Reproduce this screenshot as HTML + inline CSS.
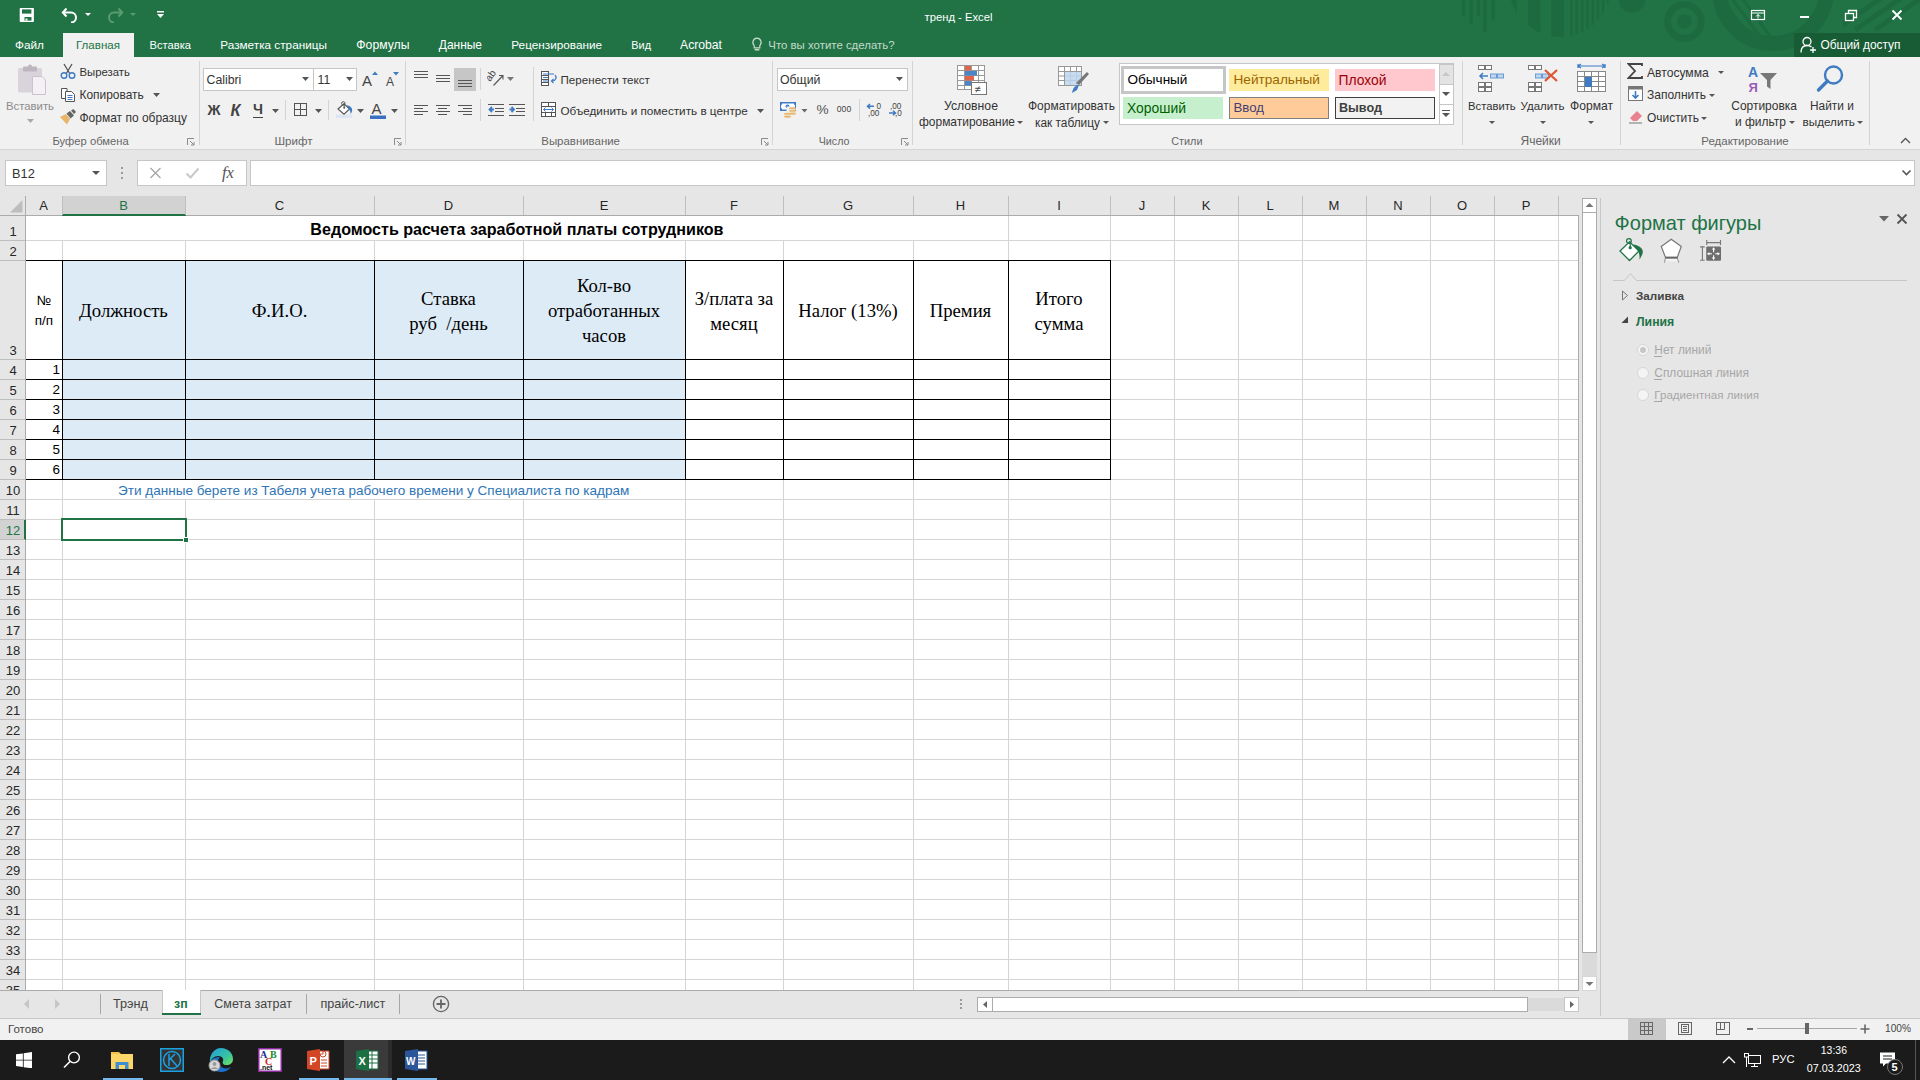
<!DOCTYPE html>
<html><head><meta charset="utf-8"><title>тренд - Excel</title>
<style>
html,body{margin:0;padding:0;width:1920px;height:1080px;overflow:hidden;background:#fff;font-family:"Liberation Sans",sans-serif;}
body>div,body>span{position:absolute;box-sizing:border-box;}
span{white-space:pre;}
</style></head><body>
<div style="left:0px;top:0px;width:1920px;height:57px;background:#217346"></div>
<div style="left:0px;top:57px;width:1920px;height:92px;background:#f1f1f1"></div>
<div style="left:0px;top:149px;width:1920px;height:1px;background:#d5d5d5"></div>
<div style="left:0px;top:150px;width:1920px;height:890px;background:#e6e6e6"></div>
<div style="left:26px;top:216px;width:1552px;height:774px;background:#fff"></div>
<div style="left:63px;top:261px;width:622px;height:218px;background:#ddebf7"></div>
<div style="left:62px;top:216px;width:1px;height:774px;background:#d4d4d4"></div>
<div style="left:185px;top:216px;width:1px;height:774px;background:#d4d4d4"></div>
<div style="left:374px;top:216px;width:1px;height:774px;background:#d4d4d4"></div>
<div style="left:523px;top:216px;width:1px;height:774px;background:#d4d4d4"></div>
<div style="left:685px;top:216px;width:1px;height:774px;background:#d4d4d4"></div>
<div style="left:783px;top:216px;width:1px;height:774px;background:#d4d4d4"></div>
<div style="left:913px;top:216px;width:1px;height:774px;background:#d4d4d4"></div>
<div style="left:1008px;top:216px;width:1px;height:774px;background:#d4d4d4"></div>
<div style="left:1110px;top:216px;width:1px;height:774px;background:#d4d4d4"></div>
<div style="left:1174px;top:216px;width:1px;height:774px;background:#d4d4d4"></div>
<div style="left:1238px;top:216px;width:1px;height:774px;background:#d4d4d4"></div>
<div style="left:1302px;top:216px;width:1px;height:774px;background:#d4d4d4"></div>
<div style="left:1366px;top:216px;width:1px;height:774px;background:#d4d4d4"></div>
<div style="left:1430px;top:216px;width:1px;height:774px;background:#d4d4d4"></div>
<div style="left:1494px;top:216px;width:1px;height:774px;background:#d4d4d4"></div>
<div style="left:1558px;top:216px;width:1px;height:774px;background:#d4d4d4"></div>
<div style="left:26px;top:240px;width:1552px;height:1px;background:#d4d4d4"></div>
<div style="left:26px;top:260px;width:1552px;height:1px;background:#d4d4d4"></div>
<div style="left:26px;top:359px;width:1552px;height:1px;background:#d4d4d4"></div>
<div style="left:26px;top:379px;width:1552px;height:1px;background:#d4d4d4"></div>
<div style="left:26px;top:399px;width:1552px;height:1px;background:#d4d4d4"></div>
<div style="left:26px;top:419px;width:1552px;height:1px;background:#d4d4d4"></div>
<div style="left:26px;top:439px;width:1552px;height:1px;background:#d4d4d4"></div>
<div style="left:26px;top:459px;width:1552px;height:1px;background:#d4d4d4"></div>
<div style="left:26px;top:479px;width:1552px;height:1px;background:#d4d4d4"></div>
<div style="left:26px;top:499px;width:1552px;height:1px;background:#d4d4d4"></div>
<div style="left:26px;top:519px;width:1552px;height:1px;background:#d4d4d4"></div>
<div style="left:26px;top:539px;width:1552px;height:1px;background:#d4d4d4"></div>
<div style="left:26px;top:559px;width:1552px;height:1px;background:#d4d4d4"></div>
<div style="left:26px;top:579px;width:1552px;height:1px;background:#d4d4d4"></div>
<div style="left:26px;top:599px;width:1552px;height:1px;background:#d4d4d4"></div>
<div style="left:26px;top:619px;width:1552px;height:1px;background:#d4d4d4"></div>
<div style="left:26px;top:639px;width:1552px;height:1px;background:#d4d4d4"></div>
<div style="left:26px;top:659px;width:1552px;height:1px;background:#d4d4d4"></div>
<div style="left:26px;top:679px;width:1552px;height:1px;background:#d4d4d4"></div>
<div style="left:26px;top:699px;width:1552px;height:1px;background:#d4d4d4"></div>
<div style="left:26px;top:719px;width:1552px;height:1px;background:#d4d4d4"></div>
<div style="left:26px;top:739px;width:1552px;height:1px;background:#d4d4d4"></div>
<div style="left:26px;top:759px;width:1552px;height:1px;background:#d4d4d4"></div>
<div style="left:26px;top:779px;width:1552px;height:1px;background:#d4d4d4"></div>
<div style="left:26px;top:799px;width:1552px;height:1px;background:#d4d4d4"></div>
<div style="left:26px;top:819px;width:1552px;height:1px;background:#d4d4d4"></div>
<div style="left:26px;top:839px;width:1552px;height:1px;background:#d4d4d4"></div>
<div style="left:26px;top:859px;width:1552px;height:1px;background:#d4d4d4"></div>
<div style="left:26px;top:879px;width:1552px;height:1px;background:#d4d4d4"></div>
<div style="left:26px;top:899px;width:1552px;height:1px;background:#d4d4d4"></div>
<div style="left:26px;top:919px;width:1552px;height:1px;background:#d4d4d4"></div>
<div style="left:26px;top:939px;width:1552px;height:1px;background:#d4d4d4"></div>
<div style="left:26px;top:959px;width:1552px;height:1px;background:#d4d4d4"></div>
<div style="left:26px;top:979px;width:1552px;height:1px;background:#d4d4d4"></div>
<div style="left:26px;top:216px;width:982px;height:24px;background:#fff"></div>
<div style="left:63px;top:480px;width:622px;height:19px;background:#fff"></div>
<div style="left:62px;top:260px;width:1px;height:220px;background:#000"></div>
<div style="left:185px;top:260px;width:1px;height:220px;background:#000"></div>
<div style="left:374px;top:260px;width:1px;height:220px;background:#000"></div>
<div style="left:523px;top:260px;width:1px;height:220px;background:#000"></div>
<div style="left:685px;top:260px;width:1px;height:220px;background:#000"></div>
<div style="left:783px;top:260px;width:1px;height:220px;background:#000"></div>
<div style="left:913px;top:260px;width:1px;height:220px;background:#000"></div>
<div style="left:1008px;top:260px;width:1px;height:220px;background:#000"></div>
<div style="left:1110px;top:260px;width:1px;height:220px;background:#000"></div>
<div style="left:26px;top:260px;width:1085px;height:1px;background:#000"></div>
<div style="left:26px;top:359px;width:1085px;height:1px;background:#000"></div>
<div style="left:26px;top:379px;width:1085px;height:1px;background:#000"></div>
<div style="left:26px;top:399px;width:1085px;height:1px;background:#000"></div>
<div style="left:26px;top:419px;width:1085px;height:1px;background:#000"></div>
<div style="left:26px;top:439px;width:1085px;height:1px;background:#000"></div>
<div style="left:26px;top:459px;width:1085px;height:1px;background:#000"></div>
<div style="left:26px;top:479px;width:1085px;height:1px;background:#000"></div>
<div style="left:1578px;top:215px;width:1px;height:776px;background:#ababab"></div>
<div style="left:0px;top:990px;width:1579px;height:1px;background:#ababab"></div>
<div style="left:0px;top:196px;width:1578px;height:19px;background:#e6e6e6"></div>
<div style="left:0px;top:215px;width:1578px;height:1px;background:#ababab"></div>
<div style="left:62px;top:196px;width:123px;height:19px;background:#d2d2d2"></div>
<div style="left:62px;top:214px;width:124px;height:2px;background:#217346"></div>
<div style="left:25px;top:196px;width:1px;height:19px;background:#bfbfbf"></div>
<div style="left:62px;top:196px;width:1px;height:19px;background:#bfbfbf"></div>
<div style="left:185px;top:196px;width:1px;height:19px;background:#bfbfbf"></div>
<div style="left:374px;top:196px;width:1px;height:19px;background:#bfbfbf"></div>
<div style="left:523px;top:196px;width:1px;height:19px;background:#bfbfbf"></div>
<div style="left:685px;top:196px;width:1px;height:19px;background:#bfbfbf"></div>
<div style="left:783px;top:196px;width:1px;height:19px;background:#bfbfbf"></div>
<div style="left:913px;top:196px;width:1px;height:19px;background:#bfbfbf"></div>
<div style="left:1008px;top:196px;width:1px;height:19px;background:#bfbfbf"></div>
<div style="left:1110px;top:196px;width:1px;height:19px;background:#bfbfbf"></div>
<div style="left:1174px;top:196px;width:1px;height:19px;background:#bfbfbf"></div>
<div style="left:1238px;top:196px;width:1px;height:19px;background:#bfbfbf"></div>
<div style="left:1302px;top:196px;width:1px;height:19px;background:#bfbfbf"></div>
<div style="left:1366px;top:196px;width:1px;height:19px;background:#bfbfbf"></div>
<div style="left:1430px;top:196px;width:1px;height:19px;background:#bfbfbf"></div>
<div style="left:1494px;top:196px;width:1px;height:19px;background:#bfbfbf"></div>
<div style="left:1558px;top:196px;width:1px;height:19px;background:#bfbfbf"></div>
<div style="left:25px;top:196px;width:1px;height:794px;background:#ababab"></div>
<span style="left:39.16px;top:196.50px;font-family:'Liberation Sans';font-size:13.00px;line-height:18px;color:#262626;font-weight:400;">A</span>
<span style="left:119.16px;top:196.50px;font-family:'Liberation Sans';font-size:13.00px;line-height:18px;color:#217346;font-weight:400;">B</span>
<span style="left:274.81px;top:196.50px;font-family:'Liberation Sans';font-size:13.00px;line-height:18px;color:#262626;font-weight:400;">C</span>
<span style="left:443.81px;top:196.50px;font-family:'Liberation Sans';font-size:13.00px;line-height:18px;color:#262626;font-weight:400;">D</span>
<span style="left:599.66px;top:196.50px;font-family:'Liberation Sans';font-size:13.00px;line-height:18px;color:#262626;font-weight:400;">E</span>
<span style="left:730.03px;top:196.50px;font-family:'Liberation Sans';font-size:13.00px;line-height:18px;color:#262626;font-weight:400;">F</span>
<span style="left:842.94px;top:196.50px;font-family:'Liberation Sans';font-size:13.00px;line-height:18px;color:#262626;font-weight:400;">G</span>
<span style="left:955.81px;top:196.50px;font-family:'Liberation Sans';font-size:13.00px;line-height:18px;color:#262626;font-weight:400;">H</span>
<span style="left:1057.19px;top:196.50px;font-family:'Liberation Sans';font-size:13.00px;line-height:18px;color:#262626;font-weight:400;">I</span>
<span style="left:1138.75px;top:196.50px;font-family:'Liberation Sans';font-size:13.00px;line-height:18px;color:#262626;font-weight:400;">J</span>
<span style="left:1201.66px;top:196.50px;font-family:'Liberation Sans';font-size:13.00px;line-height:18px;color:#262626;font-weight:400;">K</span>
<span style="left:1266.38px;top:196.50px;font-family:'Liberation Sans';font-size:13.00px;line-height:18px;color:#262626;font-weight:400;">L</span>
<span style="left:1328.58px;top:196.50px;font-family:'Liberation Sans';font-size:13.00px;line-height:18px;color:#262626;font-weight:400;">M</span>
<span style="left:1393.31px;top:196.50px;font-family:'Liberation Sans';font-size:13.00px;line-height:18px;color:#262626;font-weight:400;">N</span>
<span style="left:1456.94px;top:196.50px;font-family:'Liberation Sans';font-size:13.00px;line-height:18px;color:#262626;font-weight:400;">O</span>
<span style="left:1521.66px;top:196.50px;font-family:'Liberation Sans';font-size:13.00px;line-height:18px;color:#262626;font-weight:400;">P</span>
<svg style="position:absolute;left:10px;top:200px;" width="13" height="13" viewBox="0 0 13 13"><polygon points="12.5,0 12.5,12.5 0,12.5" fill="#bdbdbd"/></svg>
<div style="left:0px;top:240px;width:25px;height:1px;background:#bdbdbd"></div>
<span style="left:9.38px;top:223.00px;font-family:'Liberation Sans';font-size:13.00px;line-height:18px;color:#262626;font-weight:400;">1</span>
<div style="left:0px;top:260px;width:25px;height:1px;background:#bdbdbd"></div>
<span style="left:9.38px;top:243.00px;font-family:'Liberation Sans';font-size:13.00px;line-height:18px;color:#262626;font-weight:400;">2</span>
<div style="left:0px;top:359px;width:25px;height:1px;background:#bdbdbd"></div>
<span style="left:9.38px;top:342.00px;font-family:'Liberation Sans';font-size:13.00px;line-height:18px;color:#262626;font-weight:400;">3</span>
<div style="left:0px;top:379px;width:25px;height:1px;background:#bdbdbd"></div>
<span style="left:9.38px;top:362.00px;font-family:'Liberation Sans';font-size:13.00px;line-height:18px;color:#262626;font-weight:400;">4</span>
<div style="left:0px;top:399px;width:25px;height:1px;background:#bdbdbd"></div>
<span style="left:9.38px;top:382.00px;font-family:'Liberation Sans';font-size:13.00px;line-height:18px;color:#262626;font-weight:400;">5</span>
<div style="left:0px;top:419px;width:25px;height:1px;background:#bdbdbd"></div>
<span style="left:9.38px;top:402.00px;font-family:'Liberation Sans';font-size:13.00px;line-height:18px;color:#262626;font-weight:400;">6</span>
<div style="left:0px;top:439px;width:25px;height:1px;background:#bdbdbd"></div>
<span style="left:9.38px;top:422.00px;font-family:'Liberation Sans';font-size:13.00px;line-height:18px;color:#262626;font-weight:400;">7</span>
<div style="left:0px;top:459px;width:25px;height:1px;background:#bdbdbd"></div>
<span style="left:9.38px;top:442.00px;font-family:'Liberation Sans';font-size:13.00px;line-height:18px;color:#262626;font-weight:400;">8</span>
<div style="left:0px;top:479px;width:25px;height:1px;background:#bdbdbd"></div>
<span style="left:9.38px;top:462.00px;font-family:'Liberation Sans';font-size:13.00px;line-height:18px;color:#262626;font-weight:400;">9</span>
<div style="left:0px;top:499px;width:25px;height:1px;background:#bdbdbd"></div>
<span style="left:5.77px;top:482.00px;font-family:'Liberation Sans';font-size:13.00px;line-height:18px;color:#262626;font-weight:400;">10</span>
<div style="left:0px;top:519px;width:25px;height:1px;background:#bdbdbd"></div>
<span style="left:6.25px;top:502.00px;font-family:'Liberation Sans';font-size:13.00px;line-height:18px;color:#262626;font-weight:400;">11</span>
<div style="left:0px;top:520px;width:25px;height:20px;background:#d2d2d2"></div>
<div style="left:24px;top:520px;width:2px;height:20px;background:#217346"></div>
<div style="left:0px;top:539px;width:25px;height:1px;background:#bdbdbd"></div>
<span style="left:5.77px;top:522.00px;font-family:'Liberation Sans';font-size:13.00px;line-height:18px;color:#217346;font-weight:400;">12</span>
<div style="left:0px;top:559px;width:25px;height:1px;background:#bdbdbd"></div>
<span style="left:5.77px;top:542.00px;font-family:'Liberation Sans';font-size:13.00px;line-height:18px;color:#262626;font-weight:400;">13</span>
<div style="left:0px;top:579px;width:25px;height:1px;background:#bdbdbd"></div>
<span style="left:5.77px;top:562.00px;font-family:'Liberation Sans';font-size:13.00px;line-height:18px;color:#262626;font-weight:400;">14</span>
<div style="left:0px;top:599px;width:25px;height:1px;background:#bdbdbd"></div>
<span style="left:5.77px;top:582.00px;font-family:'Liberation Sans';font-size:13.00px;line-height:18px;color:#262626;font-weight:400;">15</span>
<div style="left:0px;top:619px;width:25px;height:1px;background:#bdbdbd"></div>
<span style="left:5.77px;top:602.00px;font-family:'Liberation Sans';font-size:13.00px;line-height:18px;color:#262626;font-weight:400;">16</span>
<div style="left:0px;top:639px;width:25px;height:1px;background:#bdbdbd"></div>
<span style="left:5.77px;top:622.00px;font-family:'Liberation Sans';font-size:13.00px;line-height:18px;color:#262626;font-weight:400;">17</span>
<div style="left:0px;top:659px;width:25px;height:1px;background:#bdbdbd"></div>
<span style="left:5.77px;top:642.00px;font-family:'Liberation Sans';font-size:13.00px;line-height:18px;color:#262626;font-weight:400;">18</span>
<div style="left:0px;top:679px;width:25px;height:1px;background:#bdbdbd"></div>
<span style="left:5.77px;top:662.00px;font-family:'Liberation Sans';font-size:13.00px;line-height:18px;color:#262626;font-weight:400;">19</span>
<div style="left:0px;top:699px;width:25px;height:1px;background:#bdbdbd"></div>
<span style="left:5.77px;top:682.00px;font-family:'Liberation Sans';font-size:13.00px;line-height:18px;color:#262626;font-weight:400;">20</span>
<div style="left:0px;top:719px;width:25px;height:1px;background:#bdbdbd"></div>
<span style="left:5.77px;top:702.00px;font-family:'Liberation Sans';font-size:13.00px;line-height:18px;color:#262626;font-weight:400;">21</span>
<div style="left:0px;top:739px;width:25px;height:1px;background:#bdbdbd"></div>
<span style="left:5.77px;top:722.00px;font-family:'Liberation Sans';font-size:13.00px;line-height:18px;color:#262626;font-weight:400;">22</span>
<div style="left:0px;top:759px;width:25px;height:1px;background:#bdbdbd"></div>
<span style="left:5.77px;top:742.00px;font-family:'Liberation Sans';font-size:13.00px;line-height:18px;color:#262626;font-weight:400;">23</span>
<div style="left:0px;top:779px;width:25px;height:1px;background:#bdbdbd"></div>
<span style="left:5.77px;top:762.00px;font-family:'Liberation Sans';font-size:13.00px;line-height:18px;color:#262626;font-weight:400;">24</span>
<div style="left:0px;top:799px;width:25px;height:1px;background:#bdbdbd"></div>
<span style="left:5.77px;top:782.00px;font-family:'Liberation Sans';font-size:13.00px;line-height:18px;color:#262626;font-weight:400;">25</span>
<div style="left:0px;top:819px;width:25px;height:1px;background:#bdbdbd"></div>
<span style="left:5.77px;top:802.00px;font-family:'Liberation Sans';font-size:13.00px;line-height:18px;color:#262626;font-weight:400;">26</span>
<div style="left:0px;top:839px;width:25px;height:1px;background:#bdbdbd"></div>
<span style="left:5.77px;top:822.00px;font-family:'Liberation Sans';font-size:13.00px;line-height:18px;color:#262626;font-weight:400;">27</span>
<div style="left:0px;top:859px;width:25px;height:1px;background:#bdbdbd"></div>
<span style="left:5.77px;top:842.00px;font-family:'Liberation Sans';font-size:13.00px;line-height:18px;color:#262626;font-weight:400;">28</span>
<div style="left:0px;top:879px;width:25px;height:1px;background:#bdbdbd"></div>
<span style="left:5.77px;top:862.00px;font-family:'Liberation Sans';font-size:13.00px;line-height:18px;color:#262626;font-weight:400;">29</span>
<div style="left:0px;top:899px;width:25px;height:1px;background:#bdbdbd"></div>
<span style="left:5.77px;top:882.00px;font-family:'Liberation Sans';font-size:13.00px;line-height:18px;color:#262626;font-weight:400;">30</span>
<div style="left:0px;top:919px;width:25px;height:1px;background:#bdbdbd"></div>
<span style="left:5.77px;top:902.00px;font-family:'Liberation Sans';font-size:13.00px;line-height:18px;color:#262626;font-weight:400;">31</span>
<div style="left:0px;top:939px;width:25px;height:1px;background:#bdbdbd"></div>
<span style="left:5.77px;top:922.00px;font-family:'Liberation Sans';font-size:13.00px;line-height:18px;color:#262626;font-weight:400;">32</span>
<div style="left:0px;top:959px;width:25px;height:1px;background:#bdbdbd"></div>
<span style="left:5.77px;top:942.00px;font-family:'Liberation Sans';font-size:13.00px;line-height:18px;color:#262626;font-weight:400;">33</span>
<div style="left:0px;top:979px;width:25px;height:1px;background:#bdbdbd"></div>
<span style="left:5.77px;top:962.00px;font-family:'Liberation Sans';font-size:13.00px;line-height:18px;color:#262626;font-weight:400;">34</span>
<span style="left:5.77px;top:982.00px;font-family:'Liberation Sans';font-size:13.00px;line-height:18px;color:#262626;font-weight:400;">35</span>
<div style="left:0px;top:990px;width:26px;height:1px;background:#ababab"></div>
<span style="left:310.36px;top:218.00px;font-family:'Liberation Sans';font-size:16.10px;line-height:22px;color:#000;font-weight:700;">Ведомость расчета заработной платы сотрудников</span>
<span style="left:79.10px;top:299.00px;font-family:'Liberation Serif';font-size:18.67px;line-height:24px;color:#000;font-weight:400;">Должность</span>
<span style="left:251.64px;top:299.00px;font-family:'Liberation Serif';font-size:18.67px;line-height:24px;color:#000;font-weight:400;">Ф.И.О.</span>
<span style="left:421.11px;top:286.50px;font-family:'Liberation Serif';font-size:18.67px;line-height:24px;color:#000;font-weight:400;">Ставка</span>
<span style="left:409.25px;top:311.50px;font-family:'Liberation Serif';font-size:18.67px;line-height:24px;color:#000;font-weight:400;">руб  /день</span>
<span style="left:576.92px;top:274.00px;font-family:'Liberation Serif';font-size:18.67px;line-height:24px;color:#000;font-weight:400;">Кол-во</span>
<span style="left:547.89px;top:299.00px;font-family:'Liberation Serif';font-size:18.67px;line-height:24px;color:#000;font-weight:400;">отработанных</span>
<span style="left:581.94px;top:324.00px;font-family:'Liberation Serif';font-size:18.67px;line-height:24px;color:#000;font-weight:400;">часов</span>
<span style="left:694.67px;top:286.50px;font-family:'Liberation Serif';font-size:18.67px;line-height:24px;color:#000;font-weight:400;">З/плата за</span>
<span style="left:710.28px;top:311.50px;font-family:'Liberation Serif';font-size:18.67px;line-height:24px;color:#000;font-weight:400;">месяц</span>
<span style="left:798.22px;top:299.00px;font-family:'Liberation Serif';font-size:18.67px;line-height:24px;color:#000;font-weight:400;">Налог (13%)</span>
<span style="left:929.75px;top:299.00px;font-family:'Liberation Serif';font-size:18.67px;line-height:24px;color:#000;font-weight:400;">Премия</span>
<span style="left:1035.37px;top:286.50px;font-family:'Liberation Serif';font-size:18.67px;line-height:24px;color:#000;font-weight:400;">Итого</span>
<span style="left:1034.54px;top:311.50px;font-family:'Liberation Serif';font-size:18.67px;line-height:24px;color:#000;font-weight:400;">сумма</span>
<span style="left:36.76px;top:291.50px;font-family:'Liberation Sans';font-size:13.50px;line-height:18px;color:#000;font-weight:400;">№</span>
<span style="left:34.81px;top:311.50px;font-family:'Liberation Sans';font-size:13.50px;line-height:18px;color:#000;font-weight:400;">п/п</span>
<span style="left:52.49px;top:361.00px;font-family:'Liberation Sans';font-size:13.50px;line-height:18px;color:#000;font-weight:400;">1</span>
<span style="left:52.49px;top:381.00px;font-family:'Liberation Sans';font-size:13.50px;line-height:18px;color:#000;font-weight:400;">2</span>
<span style="left:52.49px;top:401.00px;font-family:'Liberation Sans';font-size:13.50px;line-height:18px;color:#000;font-weight:400;">3</span>
<span style="left:52.49px;top:421.00px;font-family:'Liberation Sans';font-size:13.50px;line-height:18px;color:#000;font-weight:400;">4</span>
<span style="left:52.49px;top:441.00px;font-family:'Liberation Sans';font-size:13.50px;line-height:18px;color:#000;font-weight:400;">5</span>
<span style="left:52.49px;top:461.00px;font-family:'Liberation Sans';font-size:13.50px;line-height:18px;color:#000;font-weight:400;">6</span>
<span style="left:118.00px;top:482.00px;font-family:'Liberation Sans';font-size:13.56px;line-height:18px;color:#2f75b5;font-weight:400;">Эти данные берете из Табеля учета рабочего времени у Специалиста по кадрам</span>
<div style="left:61px;top:518px;width:126px;height:23px;border:2px solid #217346"></div>
<div style="left:183px;top:537px;width:6px;height:6px;background:#217346;border:1px solid #fff"></div>
<div style="left:1579px;top:196px;width:21px;height:795px;background:#e6e6e6"></div>
<div style="left:1582px;top:198px;width:15px;height:15px;background:#fff;border:1px solid #ababab"></div>
<svg style="position:absolute;left:1582px;top:198px;" width="15" height="15" viewBox="0 0 15 15"><polygon points="3.5,9 7.5,5 11.5,9" fill="#777"/></svg>
<div style="left:1582px;top:212px;width:15px;height:741px;background:#fff;border:1px solid #ababab"></div>
<div style="left:1582px;top:953px;width:15px;height:23px;background:#dadada"></div>
<div style="left:1582px;top:976px;width:15px;height:15px;background:#fff;border:1px solid #d6d6d6"></div>
<svg style="position:absolute;left:1582px;top:976px;" width="15" height="15" viewBox="0 0 15 15"><polygon points="3.5,6 11.5,6 7.5,10" fill="#777"/></svg>
<div style="left:1600px;top:198px;width:1px;height:818px;background:#c6c6c6"></div>
<div style="left:1601px;top:196px;width:319px;height:822px;background:#e6e6e6"></div>
<div style="left:0px;top:991px;width:1600px;height:27px;background:#e6e6e6"></div>
<div style="left:0px;top:1018px;width:1920px;height:1px;background:#c6c6c6"></div>
<div style="left:0px;top:1019px;width:1920px;height:21px;background:#f1f1f1"></div>
<div style="left:0px;top:1040px;width:1920px;height:40px;background:#1b1b1b"></div>
<svg style="position:absolute;left:1440px;top:0px;" width="480" height="57" viewBox="0 0 480 57">
      <g fill="#1e6a40">
        <rect x="22" y="0" width="3.5" height="16.3"/><rect x="29.3" y="0" width="3.5" height="23.8"/>
        <rect x="36.7" y="0" width="3.5" height="16.3"/><rect x="43.2" y="0" width="3.5" height="32.3"/>
        <rect x="51.4" y="0" width="3.5" height="20.6"/>
      </g>
      <clipPath id="hc"><circle cx="120" cy="-14" r="51"/></clipPath>
      <g clip-path="url(#hc)" fill="#1e6a40">
        <rect x="66" y="0" width="11" height="60"/>
        <rect x="88" y="0" width="12.5" height="60"/><rect x="111.3" y="0" width="12.7" height="60"/>
        <rect x="130" y="0" width="2.6" height="60"/><rect x="135.5" y="0" width="2.6" height="60"/><rect x="141" y="0" width="2.6" height="60"/>
        <rect x="146.2" y="0" width="2.6" height="60"/><rect x="151.4" y="0" width="2.6" height="60"/><rect x="156.6" y="0" width="2.6" height="60"/>
        <rect x="161.8" y="0" width="2.6" height="60"/><rect x="167" y="0" width="2.6" height="60"/>
      </g>
      <circle cx="192" cy="-1" r="13.5" fill="#1e6a40"/>
      <circle cx="244.4" cy="21.5" r="16.8" fill="none" stroke="#1e6a40" stroke-width="6.8"/>
      <circle cx="244.4" cy="21.5" r="7.3" fill="#1e6a40"/>
      <circle cx="333" cy="-10" r="53.5" fill="none" stroke="#1e6a40" stroke-width="15"/>
      <clipPath id="bc"><circle cx="333" cy="-10" r="46"/></clipPath>
      <g clip-path="url(#bc)" stroke="#1e6a40" stroke-width="3.2">
        <line x1="278" y1="-6" x2="318" y2="48"/><line x1="287" y1="-8" x2="327" y2="46"/><line x1="296" y1="-10" x2="336" y2="44"/>
      </g>
      <clipPath id="tr"><rect x="403" y="0" width="77" height="32"/></clipPath>
      <g clip-path="url(#tr)" stroke="#1e6a40" stroke-width="5">
        <line x1="450" y1="-8" x2="395" y2="30"/><line x1="470" y1="-8" x2="415" y2="30"/><line x1="490" y1="-8" x2="435" y2="30"/>
      </g>
    </svg>
<div style="left:1794px;top:33px;width:126px;height:24px;background:#185c35"></div>
<svg style="position:absolute;left:18px;top:6px;" width="18" height="18" viewBox="0 0 18 18"><rect x="1.7" y="2" width="14.2" height="14" rx="0.8" fill="#fff"/><rect x="4" y="3.4" width="9.4" height="4.2" fill="#217346"/><rect x="6.5" y="11" width="7" height="3.6" fill="#217346"/><rect x="7.5" y="12.6" width="2" height="2" fill="#fff"/></svg>
<svg style="position:absolute;left:60px;top:5px;" width="20" height="18" viewBox="0 0 20 18"><path d="M6.5 3.5 L2.8 7.5 L6.5 11.5 M2.8 7.5 H11 A5 5 0 0 1 11 17.5" fill="none" stroke="#fff" stroke-width="2"/></svg>
<svg style="position:absolute;left:84px;top:12px;" width="8" height="5" viewBox="0 0 8 5"><polygon points="1,1 7,1 4,4" fill="#fff"/></svg>
<svg style="position:absolute;left:105px;top:5px;" width="20" height="18" viewBox="0 0 20 18"><path d="M13.5 3.5 L17.2 7.5 L13.5 11.5 M17.2 7.5 H9 A5 5 0 0 0 9 17.5" fill="none" stroke="#5b9b72" stroke-width="2"/></svg>
<svg style="position:absolute;left:129px;top:12px;" width="8" height="5" viewBox="0 0 8 5"><polygon points="1,1 7,1 4,4" fill="#5b9b72"/></svg>
<svg style="position:absolute;left:156px;top:10px;" width="9" height="9" viewBox="0 0 9 9"><rect x="1" y="1" width="7" height="1.5" fill="#fff"/><polygon points="1,4 8,4 4.5,8" fill="#fff"/></svg>
<span style="left:924.50px;top:7.50px;font-family:'Liberation Sans';font-size:11.26px;line-height:18px;color:#ffffff;font-weight:400;">тренд - Excel</span>
<svg style="position:absolute;left:1750px;top:8px;" width="16" height="14" viewBox="0 0 16 14"><rect x="1.5" y="2.5" width="13" height="9" fill="none" stroke="#fff" stroke-width="1.2"/><line x1="1.5" y1="5" x2="14.5" y2="5" stroke="#fff"/><path d="M8 10.5 V6.5 M6 8.5 L8 6.5 L10 8.5" stroke="#fff" fill="none"/></svg>
<div style="left:1800px;top:16px;width:9px;height:2px;background:#fff"></div>
<svg style="position:absolute;left:1844px;top:9px;" width="14" height="13" viewBox="0 0 14 13"><rect x="1.5" y="4.5" width="8" height="7" fill="none" stroke="#fff" stroke-width="1.3"/><path d="M4.5 4.5 V1.5 H12.5 V8.5 H9.5" fill="none" stroke="#fff" stroke-width="1.3"/></svg>
<svg style="position:absolute;left:1891px;top:9px;" width="12" height="12" viewBox="0 0 12 12"><path d="M1.5 1.5 L10.5 10.5 M10.5 1.5 L1.5 10.5" stroke="#fff" stroke-width="1.9"/></svg>
<div style="left:63px;top:33px;width:71px;height:24px;background:#f1f1f1"></div>
<span style="left:15.00px;top:36.00px;font-family:'Liberation Sans';font-size:11.80px;line-height:18px;color:#ffffff;font-weight:400;">Файл</span>
<span style="left:76.00px;top:36.00px;font-family:'Liberation Sans';font-size:11.56px;line-height:18px;color:#217346;font-weight:400;">Главная</span>
<span style="left:149.50px;top:36.00px;font-family:'Liberation Sans';font-size:11.17px;line-height:18px;color:#ffffff;font-weight:400;">Вставка</span>
<span style="left:220.30px;top:36.00px;font-family:'Liberation Sans';font-size:11.76px;line-height:18px;color:#ffffff;font-weight:400;">Разметка страницы</span>
<span style="left:356.30px;top:36.00px;font-family:'Liberation Sans';font-size:12.23px;line-height:18px;color:#ffffff;font-weight:400;">Формулы</span>
<span style="left:438.80px;top:36.00px;font-family:'Liberation Sans';font-size:11.96px;line-height:18px;color:#ffffff;font-weight:400;">Данные</span>
<span style="left:511.30px;top:36.00px;font-family:'Liberation Sans';font-size:11.75px;line-height:18px;color:#ffffff;font-weight:400;">Рецензирование</span>
<span style="left:631.30px;top:36.00px;font-family:'Liberation Sans';font-size:10.89px;line-height:18px;color:#ffffff;font-weight:400;">Вид</span>
<span style="left:680.00px;top:36.00px;font-family:'Liberation Sans';font-size:12.19px;line-height:18px;color:#ffffff;font-weight:400;">Acrobat</span>
<svg style="position:absolute;left:751px;top:37px;" width="12" height="15" viewBox="0 0 12 15"><path d="M6 1.2 A4.3 4.3 0 0 0 3.2 8.6 V10.8 H8.8 V8.6 A4.3 4.3 0 0 0 6 1.2 Z" fill="none" stroke="#c3dbc9" stroke-width="1.2"/><rect x="3.7" y="12" width="4.6" height="1.5" fill="#c3dbc9"/></svg>
<span style="left:768.30px;top:36.00px;font-family:'Liberation Sans';font-size:11.43px;line-height:18px;color:#c3dbc9;font-weight:400;">Что вы хотите сделать?</span>
<svg style="position:absolute;left:1800px;top:36px;" width="17" height="18" viewBox="0 0 17 18"><circle cx="7" cy="5.5" r="4" fill="none" stroke="#fff" stroke-width="1.3"/><path d="M1 16.5 C1 11 4 9.5 7 9.5 C9 9.5 10.5 10 11.5 11" fill="none" stroke="#fff" stroke-width="1.3"/><path d="M13 11 V17 M10 14 H16" stroke="#fff" stroke-width="1.3"/></svg>
<span style="left:1820.50px;top:36.00px;font-family:'Liberation Sans';font-size:11.91px;line-height:18px;color:#ffffff;font-weight:400;">Общий доступ</span>
<div style="left:199px;top:61px;width:1px;height:84px;background:#d4d4d4"></div>
<div style="left:405px;top:61px;width:1px;height:84px;background:#d4d4d4"></div>
<div style="left:772px;top:61px;width:1px;height:84px;background:#d4d4d4"></div>
<div style="left:912px;top:61px;width:1px;height:84px;background:#d4d4d4"></div>
<div style="left:1462px;top:61px;width:1px;height:84px;background:#d4d4d4"></div>
<div style="left:1620px;top:61px;width:1px;height:84px;background:#d4d4d4"></div>
<div style="left:1869px;top:61px;width:1px;height:84px;background:#d4d4d4"></div>
<span style="left:52.50px;top:133.00px;font-family:'Liberation Sans';font-size:11.22px;line-height:16px;color:#666666;font-weight:400;">Буфер обмена</span>
<span style="left:274.50px;top:133.00px;font-family:'Liberation Sans';font-size:11.55px;line-height:16px;color:#666666;font-weight:400;">Шрифт</span>
<span style="left:541.25px;top:133.00px;font-family:'Liberation Sans';font-size:11.44px;line-height:16px;color:#666666;font-weight:400;">Выравнивание</span>
<span style="left:818.75px;top:133.00px;font-family:'Liberation Sans';font-size:10.69px;line-height:16px;color:#666666;font-weight:400;">Число</span>
<span style="left:1171.25px;top:133.00px;font-family:'Liberation Sans';font-size:10.85px;line-height:16px;color:#666666;font-weight:400;">Стили</span>
<span style="left:1520.50px;top:133.00px;font-family:'Liberation Sans';font-size:12.00px;line-height:16px;color:#666666;font-weight:400;">Ячейки</span>
<span style="left:1701.25px;top:133.00px;font-family:'Liberation Sans';font-size:11.49px;line-height:16px;color:#666666;font-weight:400;">Редактирование</span>
<svg style="position:absolute;left:187px;top:138px;" width="8" height="8" viewBox="0 0 8 8"><path d="M0.5 7 V0.5 H7" fill="none" stroke="#8a8a8a"/><path d="M3 3 L7 7 M7 4 V7 H4" fill="none" stroke="#8a8a8a"/></svg>
<svg style="position:absolute;left:394px;top:138px;" width="8" height="8" viewBox="0 0 8 8"><path d="M0.5 7 V0.5 H7" fill="none" stroke="#8a8a8a"/><path d="M3 3 L7 7 M7 4 V7 H4" fill="none" stroke="#8a8a8a"/></svg>
<svg style="position:absolute;left:761px;top:138px;" width="8" height="8" viewBox="0 0 8 8"><path d="M0.5 7 V0.5 H7" fill="none" stroke="#8a8a8a"/><path d="M3 3 L7 7 M7 4 V7 H4" fill="none" stroke="#8a8a8a"/></svg>
<svg style="position:absolute;left:901px;top:138px;" width="8" height="8" viewBox="0 0 8 8"><path d="M0.5 7 V0.5 H7" fill="none" stroke="#8a8a8a"/><path d="M3 3 L7 7 M7 4 V7 H4" fill="none" stroke="#8a8a8a"/></svg>
<svg style="position:absolute;left:1900px;top:137px;" width="11" height="7" viewBox="0 0 11 7"><path d="M1 6 L5.5 1.5 L10 6" fill="none" stroke="#555" stroke-width="1.4"/></svg>
<svg style="position:absolute;left:15px;top:63px;" width="34" height="34" viewBox="0 0 34 34"><rect x="3" y="5" width="24" height="24.5" rx="1.5" fill="#d9d4db"/>
        <rect x="8" y="3.5" width="14" height="5" rx="1" fill="#bdb5bf"/><circle cx="15" cy="3.5" r="2" fill="#bdb5bf"/>
        <path d="M17.5 13.5 H27 L30.5 17 V31.5 H17.5 Z" fill="#f4f0f5" stroke="#c9c3cc" stroke-width="1"/></svg>
<span style="left:6.00px;top:98.00px;font-family:'Liberation Sans';font-size:11.32px;line-height:16px;color:#8c8c8c;font-weight:400;">Вставить</span>
<svg style="position:absolute;left:27px;top:119px;" width="7" height="4" viewBox="0 0 7 4"><polygon points="0,0 7,0 3.5,4" fill="#a8a8a8"/></svg>
<svg style="position:absolute;left:60px;top:63px;" width="16" height="16" viewBox="0 0 16 16"><path d="M4 1 L10 11 M12 1 L6 11" stroke="#555" stroke-width="1.3" fill="none"/>
        <circle cx="4" cy="12.5" r="2.8" fill="none" stroke="#3f7bc4" stroke-width="1.4"/><circle cx="12" cy="12.5" r="2.8" fill="none" stroke="#3f7bc4" stroke-width="1.4"/></svg>
<span style="left:79.50px;top:64.00px;font-family:'Liberation Sans';font-size:11.35px;line-height:16px;color:#333333;font-weight:400;">Вырезать</span>
<svg style="position:absolute;left:60px;top:87px;" width="16" height="15" viewBox="0 0 16 15"><path d="M1.5 1.5 H7 V11.5 H1.5 Z" fill="#fff" stroke="#555"/>
        <path d="M5.5 4.5 H11.5 L14.5 7.5 V14.5 H5.5 Z" fill="#fff" stroke="#555"/>
        <path d="M7.5 8.5 H12.5 M7.5 10.5 H12.5 M7.5 12.5 H12.5" stroke="#3f7bc4"/></svg>
<span style="left:79.50px;top:87.00px;font-family:'Liberation Sans';font-size:11.93px;line-height:16px;color:#333333;font-weight:400;">Копировать</span>
<svg style="position:absolute;left:153px;top:93px;" width="7" height="4" viewBox="0 0 7 4"><polygon points="0,0 7,0 3.5,4" fill="#555"/></svg>
<svg style="position:absolute;left:60px;top:109px;" width="17" height="16" viewBox="0 0 17 16"><path d="M0 8 L6 5 L10 10 L7 15.5 Z" fill="#e8b56b"/><path d="M6.5 4.5 L10.5 9.5 L14 6.5 L10 2 Z" fill="#666"/><path d="M11 1.5 L13.5 0 L16 3 L14 5 Z" fill="#666"/></svg>
<span style="left:79.50px;top:110.00px;font-family:'Liberation Sans';font-size:11.99px;line-height:16px;color:#333333;font-weight:400;">Формат по образцу</span>
<div style="left:203px;top:68px;width:111px;height:23px;background:#fff;border:1px solid #c6c6c6"></div>
<span style="left:206.50px;top:71.50px;font-family:'Liberation Sans';font-size:12.30px;line-height:16px;color:#333333;font-weight:400;">Calibri</span>
<svg style="position:absolute;left:302px;top:77px;" width="7" height="4" viewBox="0 0 7 4"><polygon points="0,0 7,0 3.5,4" fill="#555"/></svg>
<div style="left:313px;top:68px;width:44px;height:23px;background:#fff;border:1px solid #c6c6c6"></div>
<span style="left:317.50px;top:71.50px;font-family:'Liberation Sans';font-size:12.30px;line-height:16px;color:#333333;font-weight:400;">11</span>
<svg style="position:absolute;left:346px;top:77px;" width="7" height="4" viewBox="0 0 7 4"><polygon points="0,0 7,0 3.5,4" fill="#555"/></svg>
<svg style="position:absolute;left:361px;top:70px;" width="17" height="17" viewBox="0 0 17 17"><text x="1" y="16" font-family="Liberation Sans" font-size="15" fill="#444">A</text><polygon points="11,5 17,5 14,1.5" fill="#3f7bc4"/></svg>
<svg style="position:absolute;left:385px;top:70px;" width="14" height="17" viewBox="0 0 14 17"><text x="1" y="16" font-family="Liberation Sans" font-size="12" fill="#444">A</text><polygon points="8,2 14,2 11,5.5" fill="#3f7bc4"/></svg>
<span style="left:207.50px;top:102.00px;font-family:'Liberation Sans';font-size:14.38px;line-height:16px;color:#444;font-weight:700;">Ж</span>
<span style="left:230.50px;top:102.00px;font-family:'Liberation Sans';font-size:16.26px;line-height:16px;color:#444;font-weight:700;font-style:italic;">К</span>
<span style="left:253.00px;top:101.00px;font-family:'Liberation Sans';font-size:14.23px;line-height:16px;color:#444;font-weight:700;">Ч</span>
<div style="left:253px;top:117px;width:10px;height:1px;background:#444"></div>
<svg style="position:absolute;left:272px;top:109px;" width="7" height="4" viewBox="0 0 7 4"><polygon points="0,0 7,0 3.5,4" fill="#555"/></svg>
<div style="left:285px;top:100px;width:1px;height:20px;background:#d4d4d4"></div>
<svg style="position:absolute;left:294px;top:103px;" width="14" height="14" viewBox="0 0 14 14"><rect x="0.5" y="0.5" width="12" height="12" fill="none" stroke="#555"/><path d="M6.5 0.5 V12.5 M0.5 6.5 H12.5" stroke="#555"/></svg>
<svg style="position:absolute;left:315px;top:109px;" width="7" height="4" viewBox="0 0 7 4"><polygon points="0,0 7,0 3.5,4" fill="#555"/></svg>
<div style="left:328px;top:100px;width:1px;height:20px;background:#d4d4d4"></div>
<svg style="position:absolute;left:336px;top:101px;" width="18" height="18" viewBox="0 0 18 18"><rect x="0" y="13.5" width="16" height="3.5" fill="#dce7f3"/><path d="M2 8 L8 2.8 L13.5 8 L8 13.2 Z" fill="#fff" stroke="#555" stroke-width="1.1"/><circle cx="7.3" cy="2.4" r="1.7" fill="none" stroke="#555" stroke-width="1"/><path d="M8.2 2.8 V6.6" stroke="#555"/><circle cx="8.2" cy="6.8" r="1" fill="#555"/><path d="M10.5 4.2 C14 4.5 16.5 6.5 16.2 9.5 C16 11 15 12.5 14.5 13 C14.5 11 14.3 9.5 12.5 7.5 Z" fill="#3f7bc4"/></svg>
<svg style="position:absolute;left:357px;top:109px;" width="7" height="4" viewBox="0 0 7 4"><polygon points="0,0 7,0 3.5,4" fill="#555"/></svg>
<svg style="position:absolute;left:370px;top:101px;" width="17" height="18" viewBox="0 0 17 18"><text x="1.5" y="13" font-family="Liberation Sans" font-size="15" fill="#444">A</text><rect x="0" y="14.5" width="16" height="3.5" fill="#3a70c0"/></svg>
<svg style="position:absolute;left:391px;top:109px;" width="7" height="4" viewBox="0 0 7 4"><polygon points="0,0 7,0 3.5,4" fill="#555"/></svg>
<div style="left:454px;top:68px;width:22px;height:23px;background:#c6c6c6"></div>
<svg style="position:absolute;left:400px;top:60px;" width="80" height="35" viewBox="0 0 80 35"><rect x="14" y="11" width="14" height="1" fill="#555"/><rect x="14" y="14" width="14" height="1" fill="#555"/><rect x="14" y="17" width="14" height="1" fill="#555"/><rect x="36" y="15" width="14" height="1" fill="#555"/><rect x="36" y="18" width="14" height="1" fill="#555"/><rect x="36" y="21" width="14" height="1" fill="#555"/><rect x="58" y="20" width="14" height="1" fill="#555"/><rect x="58" y="23" width="14" height="1" fill="#555"/><rect x="58" y="26" width="14" height="1" fill="#555"/></svg>
<svg style="position:absolute;left:400px;top:100px;" width="80" height="20" viewBox="0 0 80 20"><rect x="14" y="5" width="14" height="1" fill="#555"/><rect x="14" y="8" width="9" height="1" fill="#555"/><rect x="14" y="11" width="14" height="1" fill="#555"/><rect x="14" y="14" width="9" height="1" fill="#555"/><rect x="36" y="5" width="14" height="1" fill="#555"/><rect x="38" y="8" width="9" height="1" fill="#555"/><rect x="36" y="11" width="14" height="1" fill="#555"/><rect x="38" y="14" width="9" height="1" fill="#555"/><rect x="58" y="5" width="14" height="1" fill="#555"/><rect x="63" y="8" width="9" height="1" fill="#555"/><rect x="58" y="11" width="14" height="1" fill="#555"/><rect x="63" y="14" width="9" height="1" fill="#555"/></svg>
<div style="left:480px;top:68px;width:1px;height:22px;background:#d4d4d4"></div>
<div style="left:480px;top:99px;width:1px;height:22px;background:#d4d4d4"></div>
<svg style="position:absolute;left:487px;top:70px;" width="18" height="17" viewBox="0 0 18 17"><text x="0" y="0" font-family="Liberation Sans" font-size="10" fill="#444" transform="translate(3 12) rotate(-55)">ab</text><path d="M6.5 15.5 L15.5 6 M12 5.5 H16 V9.5" fill="none" stroke="#555" stroke-width="1.1"/></svg>
<svg style="position:absolute;left:507px;top:77px;" width="7" height="4" viewBox="0 0 7 4"><polygon points="0,0 7,0 3.5,4" fill="#777"/></svg>
<div style="left:533px;top:67px;width:1px;height:54px;background:#d4d4d4"></div>
<svg style="position:absolute;left:488px;top:102px;" width="17" height="16" viewBox="0 0 17 16"><rect x="0" y="2" width="16" height="1" fill="#555"/><rect x="7" y="6" width="9" height="1" fill="#555"/><rect x="7" y="9" width="9" height="1" fill="#555"/><rect x="0" y="13" width="16" height="1" fill="#555"/><path d="M6 7.5 H1.5 M4 5 L1.5 7.5 L4 10" stroke="#3f7bc4" fill="none" stroke-width="1.8"/></svg>
<svg style="position:absolute;left:509px;top:102px;" width="17" height="16" viewBox="0 0 17 16"><rect x="0" y="2" width="16" height="1" fill="#555"/><rect x="7" y="6" width="9" height="1" fill="#555"/><rect x="7" y="9" width="9" height="1" fill="#555"/><rect x="0" y="13" width="16" height="1" fill="#555"/><path d="M0.5 7.5 H5 M2.5 5 L5 7.5 L2.5 10" stroke="#3f7bc4" fill="none" stroke-width="1.8"/></svg>
<svg style="position:absolute;left:540px;top:70px;" width="18" height="17" viewBox="0 0 18 17"><rect x="1.5" y="1.5" width="7" height="14" fill="#fff" stroke="#555"/><path d="M1.5 5.5 H8.5 M1.5 9.5 H8.5 M1.5 12.5 H8.5" stroke="#555"/><path d="M3 4 H14 M3 7.5 H8 M3 11 H8" stroke="#3f7bc4"/><path d="M15 5 C17 7 16 11 12 11 M13.5 9 L11.5 11 L13.5 13" fill="none" stroke="#3f7bc4" stroke-width="1.2"/></svg>
<span style="left:560.50px;top:72.00px;font-family:'Liberation Sans';font-size:11.62px;line-height:16px;color:#333333;font-weight:400;">Перенести текст</span>
<svg style="position:absolute;left:540px;top:101px;" width="17" height="17" viewBox="0 0 17 17"><rect x="1.5" y="1.5" width="14" height="14" fill="#fff" stroke="#555"/><path d="M1.5 5.5 H15.5 M1.5 11.5 H15.5 M8.5 1.5 V5.5 M5.5 11.5 V15.5 M11.5 11.5 V15.5" stroke="#555"/><path d="M3.5 8.5 H13.5 M5.5 6.5 L3.5 8.5 L5.5 10.5 M11.5 6.5 L13.5 8.5 L11.5 10.5" fill="none" stroke="#3f7bc4"/></svg>
<span style="left:560.50px;top:102.75px;font-family:'Liberation Sans';font-size:11.73px;line-height:16px;color:#333333;font-weight:400;">Объединить и поместить в центре</span>
<svg style="position:absolute;left:757px;top:109px;" width="7" height="4" viewBox="0 0 7 4"><polygon points="0,0 7,0 3.5,4" fill="#555"/></svg>
<div style="left:777px;top:68px;width:131px;height:23px;background:#fff;border:1px solid #c6c6c6"></div>
<span style="left:780.00px;top:71.50px;font-family:'Liberation Sans';font-size:12.31px;line-height:16px;color:#333333;font-weight:400;">Общий</span>
<svg style="position:absolute;left:896px;top:77px;" width="7" height="4" viewBox="0 0 7 4"><polygon points="0,0 7,0 3.5,4" fill="#555"/></svg>
<svg style="position:absolute;left:778px;top:100px;" width="20" height="20" viewBox="0 0 20 20"><path d="M2 2 H18 V11 H2 Z" fill="#3f7bc4"/><path d="M4 3.5 H16 C16 5 17 5 17 5.5 V7.5 C17 8 16 8 16 9.5 H4 C4 8 3 8 3 7.5 V5.5 C3 5 4 5 4 3.5 Z" fill="#fff"/><circle cx="9.5" cy="6.5" r="2" fill="#3f7bc4"/><rect x="8.5" y="6.5" width="8" height="6" fill="#f1f1f1"/><g fill="#e8b96b"><ellipse cx="14.5" cy="8.5" rx="3.5" ry="1.3"/><ellipse cx="14.5" cy="11" rx="3.5" ry="1.3"/><ellipse cx="14.5" cy="13.5" rx="3.5" ry="1.3"/><ellipse cx="9.5" cy="14" rx="3.5" ry="1.3"/><ellipse cx="9.5" cy="16.5" rx="3.5" ry="1.3"/></g><g stroke="#f1f1f1" stroke-width="0.7"><path d="M11 9.6 H18 M11 12.1 H18 M6 15.1 H13"/></g></svg>
<svg style="position:absolute;left:801px;top:109px;" width="7" height="4" viewBox="0 0 7 4"><polygon points="0.5,0 6.5,0 3.5,3.5" fill="#666"/></svg>
<span style="left:816.40px;top:102.30px;font-family:'Liberation Sans';font-size:13.61px;line-height:16px;color:#555;font-weight:400;">%</span>
<span style="left:836.80px;top:102.30px;font-family:'Liberation Sans';font-size:8.63px;line-height:14px;color:#444;font-weight:400;">000</span>
<div style="left:859px;top:99px;width:1px;height:22px;background:#d4d4d4"></div>
<svg style="position:absolute;left:865px;top:101px;" width="18" height="18" viewBox="0 0 18 18"><path d="M9 5.3 H2.5 M5 3 L2.5 5.3 L5 7.6" fill="none" stroke="#3f7bc4" stroke-width="1.5"/><text x="11.5" y="7.6" font-family="Liberation Sans" font-size="8.2" fill="#444">0</text><text x="3" y="14.8" font-family="Liberation Sans" font-size="8.2" fill="#444">,00</text></svg>
<svg style="position:absolute;left:888px;top:101px;" width="18" height="18" viewBox="0 0 18 18"><text x="2" y="7.6" font-family="Liberation Sans" font-size="8.2" fill="#444">,00</text><path d="M1 12 H7.5 M5 9.7 L7.5 12 L5 14.3" fill="none" stroke="#3f7bc4" stroke-width="1.5"/><text x="7" y="14.8" font-family="Liberation Sans" font-size="8.2" fill="#444">,0</text></svg>
<svg style="position:absolute;left:956px;top:64px;" width="33" height="32" viewBox="0 0 33 32"><rect x="1.5" y="1.5" width="27" height="24" fill="#fff" stroke="#999"/>
        <path d="M1.5 6.5 H28.5 M1.5 11.5 H28.5 M1.5 16.5 H28.5 M1.5 21.5 H28.5 M8.5 1.5 V25.5 M15.5 1.5 V25.5 M22.5 1.5 V25.5" stroke="#999"/>
        <rect x="9" y="2" width="6" height="4.5" fill="#e0644a"/><rect x="9" y="7" width="12" height="4.5" fill="#4a85c8"/>
        <rect x="9" y="12" width="9" height="4.5" fill="#e0644a"/><rect x="9" y="17" width="6" height="4.5" fill="#4a85c8"/>
        <rect x="15.5" y="18.5" width="15" height="12" fill="#fff" stroke="#777"/><text x="18.5" y="28.5" font-family="Liberation Sans" font-size="11" fill="#444">≠</text></svg>
<span style="left:944.00px;top:98.00px;font-family:'Liberation Sans';font-size:12.23px;line-height:16px;color:#333333;font-weight:400;">Условное</span>
<span style="left:919.00px;top:114.00px;font-family:'Liberation Sans';font-size:11.96px;line-height:16px;color:#333333;font-weight:400;">форматирование</span>
<svg style="position:absolute;left:1017px;top:121px;" width="6" height="3" viewBox="0 0 6 3"><polygon points="0,0 6,0 3,3" fill="#555"/></svg>
<svg style="position:absolute;left:1058px;top:65px;" width="32" height="30" viewBox="0 0 32 30"><rect x="0.5" y="1.5" width="23" height="19" fill="#fff" stroke="#999"/>
        <path d="M0.5 6.5 H23.5 M0.5 11 H23.5 M0.5 15.5 H23.5 M6.5 1.5 V20.5 M12.5 1.5 V20.5 M18.5 1.5 V20.5" stroke="#999"/>
        <rect x="7" y="7" width="16" height="13" fill="#bed6ee" opacity="0.85"/>
        <path d="M18 18 L29 7 L31 9 L21 20 Z" fill="#777"/><path d="M14 28 C15 22 18 20 21 20 L19 25 Z" fill="#3f7bc4"/></svg>
<span style="left:1028.00px;top:98.00px;font-family:'Liberation Sans';font-size:11.99px;line-height:16px;color:#333333;font-weight:400;">Форматировать</span>
<span style="left:1035.00px;top:114.50px;font-family:'Liberation Sans';font-size:11.87px;line-height:16px;color:#333333;font-weight:400;">как таблицу</span>
<svg style="position:absolute;left:1103px;top:121px;" width="6" height="3" viewBox="0 0 6 3"><polygon points="0,0 6,0 3,3" fill="#555"/></svg>
<div style="left:1119px;top:63px;width:335px;height:62px;background:#fff;border:1px solid #c6c6c6"></div>
<div style="left:1121px;top:66px;width:105px;height:28px;background:#fff;border:3px solid #c6c6c6"></div>
<span style="left:1127.50px;top:71.50px;font-family:'Liberation Sans';font-size:13.57px;line-height:16px;color:#000;font-weight:400;">Обычный</span>
<div style="left:1229px;top:69px;width:100px;height:22px;background:#ffeb9c"></div>
<span style="left:1233.50px;top:71.50px;font-family:'Liberation Sans';font-size:13.64px;line-height:16px;color:#9c6500;font-weight:400;">Нейтральный</span>
<div style="left:1335px;top:69px;width:100px;height:22px;background:#ffc7ce"></div>
<span style="left:1338.50px;top:71.50px;font-family:'Liberation Sans';font-size:13.86px;line-height:16px;color:#9c0006;font-weight:400;">Плохой</span>
<div style="left:1123px;top:97px;width:100px;height:22px;background:#c6efce"></div>
<span style="left:1127.00px;top:99.50px;font-family:'Liberation Sans';font-size:13.90px;line-height:16px;color:#006100;font-weight:400;">Хороший</span>
<div style="left:1229px;top:97px;width:100px;height:22px;background:#ffcc99;border:1px solid #7f7f7f"></div>
<span style="left:1233.50px;top:99.50px;font-family:'Liberation Sans';font-size:13.23px;line-height:16px;color:#3f3f76;font-weight:400;">Ввод</span>
<div style="left:1335px;top:97px;width:100px;height:22px;background:#f2f2f2;border:1px solid #3f3f3f"></div>
<span style="left:1339.00px;top:99.50px;font-family:'Liberation Sans';font-size:12.61px;line-height:16px;color:#3f3f3f;font-weight:700;">Вывод</span>
<div style="left:1439px;top:64px;width:15px;height:21px;background:#e3e3e3;border:1px solid #c6c6c6"></div>
<svg style="position:absolute;left:1442px;top:72px;" width="8" height="4" viewBox="0 0 8 4"><polygon points="0,4 8,4 4,0" fill="#c6c6c6"/></svg>
<div style="left:1439px;top:84px;width:15px;height:21px;background:#fff;border:1px solid #c6c6c6"></div>
<svg style="position:absolute;left:1442px;top:92px;" width="8" height="4" viewBox="0 0 8 4"><polygon points="0,0 8,0 4,4" fill="#555"/></svg>
<div style="left:1439px;top:104px;width:15px;height:21px;background:#fff;border:1px solid #c6c6c6"></div>
<svg style="position:absolute;left:1442px;top:110px;" width="8" height="8" viewBox="0 0 8 8"><rect x="0" y="0" width="8" height="1" fill="#555"/><polygon points="0,3 8,3 4,7" fill="#555"/></svg>
<svg style="position:absolute;left:1478px;top:64px;" width="30" height="30" viewBox="0 0 30 30"><g fill="#fff" stroke="#777"><rect x="0.5" y="1.5" width="6" height="4"/><rect x="7.5" y="1.5" width="6" height="4"/>
        <rect x="0.5" y="18.5" width="6" height="4"/><rect x="7.5" y="18.5" width="6" height="4"/><rect x="0.5" y="23.5" width="6" height="4"/><rect x="7.5" y="23.5" width="6" height="4"/></g>
        <g fill="#bed6ee" stroke="#6b9bd2"><rect x="12.5" y="10" width="6" height="4"/><rect x="19.5" y="10" width="6" height="4"/></g>
        <path d="M2 12 H10 M5 9 L2 12 L5 15" fill="none" stroke="#3f7bc4" stroke-width="1.5"/></svg>
<span style="left:1468.00px;top:98.00px;font-family:'Liberation Sans';font-size:11.26px;line-height:16px;color:#333333;font-weight:400;">Вставить</span>
<svg style="position:absolute;left:1489px;top:121px;" width="6" height="3" viewBox="0 0 6 3"><polygon points="0,0 6,0 3,3" fill="#555"/></svg>
<svg style="position:absolute;left:1528px;top:64px;" width="32" height="30" viewBox="0 0 32 30"><g fill="#fff" stroke="#777"><rect x="0.5" y="1.5" width="6" height="4"/><rect x="7.5" y="1.5" width="6" height="4"/>
        <rect x="0.5" y="18.5" width="6" height="4"/><rect x="7.5" y="18.5" width="6" height="4"/><rect x="0.5" y="23.5" width="6" height="4"/><rect x="7.5" y="23.5" width="6" height="4"/></g>
        <g fill="#bed6ee" stroke="#6b9bd2"><rect x="7.5" y="10" width="6" height="4"/><rect x="14.5" y="10" width="6" height="4"/></g>
        <path d="M17 6 L29 17 M29 6 L17 17" stroke="#e0552e" stroke-width="2.2"/></svg>
<span style="left:1520.50px;top:98.00px;font-family:'Liberation Sans';font-size:11.52px;line-height:16px;color:#333333;font-weight:400;">Удалить</span>
<svg style="position:absolute;left:1540px;top:121px;" width="6" height="3" viewBox="0 0 6 3"><polygon points="0,0 6,0 3,3" fill="#555"/></svg>
<svg style="position:absolute;left:1577px;top:63px;" width="31" height="32" viewBox="0 0 31 32"><path d="M1 1 V5 M28 1 V5 M1 3 H28 M4 1 L1 3 L4 5 M25 1 L28 3 L25 5" fill="none" stroke="#3f7bc4" stroke-width="1.2"/>
        <rect x="0.5" y="8.5" width="28" height="20" fill="#fff" stroke="#888"/>
        <path d="M0.5 13.5 H28.5 M0.5 18.5 H28.5 M0.5 23.5 H28.5 M7.5 8.5 V28.5 M14.5 8.5 V28.5 M21.5 8.5 V28.5" stroke="#888"/>
        <rect x="8" y="14" width="7" height="10" fill="#3f7bc4"/></svg>
<span style="left:1570.00px;top:98.00px;font-family:'Liberation Sans';font-size:12.10px;line-height:16px;color:#333333;font-weight:400;">Формат</span>
<svg style="position:absolute;left:1588px;top:121px;" width="6" height="3" viewBox="0 0 6 3"><polygon points="0,0 6,0 3,3" fill="#555"/></svg>
<svg style="position:absolute;left:1627px;top:63px;" width="17" height="16" viewBox="0 0 17 16"><path d="M15 3 V1 H1.5 L8 8 L1.5 15 H15 V13" fill="none" stroke="#444" stroke-width="1.8"/></svg>
<span style="left:1647.00px;top:64.50px;font-family:'Liberation Sans';font-size:12.11px;line-height:16px;color:#333333;font-weight:400;">Автосумма</span>
<svg style="position:absolute;left:1718px;top:71px;" width="6" height="3" viewBox="0 0 6 3"><polygon points="0,0 6,0 3,3" fill="#555"/></svg>
<svg style="position:absolute;left:1628px;top:86px;" width="16" height="16" viewBox="0 0 16 16"><rect x="0.5" y="0.5" width="14" height="14" fill="#fff" stroke="#777"/><rect x="0.5" y="0.5" width="14" height="3" fill="#777"/><path d="M7.5 5 V12 M4.5 9 L7.5 12 L10.5 9" fill="none" stroke="#3f7bc4" stroke-width="1.6"/></svg>
<span style="left:1647.00px;top:87.00px;font-family:'Liberation Sans';font-size:12.02px;line-height:16px;color:#333333;font-weight:400;">Заполнить</span>
<svg style="position:absolute;left:1709px;top:94px;" width="6" height="3" viewBox="0 0 6 3"><polygon points="0,0 6,0 3,3" fill="#555"/></svg>
<svg style="position:absolute;left:1628px;top:109px;" width="16" height="15" viewBox="0 0 16 15"><path d="M2 9 L9 2 L14 7 L9 12 H5 Z" fill="#e8828f"/><path d="M1 14 H14" stroke="#777"/></svg>
<span style="left:1647.00px;top:110.00px;font-family:'Liberation Sans';font-size:11.95px;line-height:16px;color:#333333;font-weight:400;">Очистить</span>
<svg style="position:absolute;left:1701px;top:117px;" width="6" height="3" viewBox="0 0 6 3"><polygon points="0,0 6,0 3,3" fill="#555"/></svg>
<svg style="position:absolute;left:1748px;top:64px;" width="32" height="30" viewBox="0 0 32 30"><text x="0" y="13" font-family="Liberation Sans" font-weight="700" font-size="14" fill="#3f7bc4">A</text>
        <text x="0.5" y="28" font-family="Liberation Sans" font-weight="700" font-size="13" fill="#9b59b6">Я</text>
        <path d="M12 9 H29 L22.5 16 V25 L19 22.5 V16 Z" fill="#777"/></svg>
<span style="left:1731.25px;top:98.00px;font-family:'Liberation Sans';font-size:11.98px;line-height:16px;color:#333333;font-weight:400;">Сортировка</span>
<span style="left:1735.00px;top:114.00px;font-family:'Liberation Sans';font-size:11.98px;line-height:16px;color:#333333;font-weight:400;">и фильтр</span>
<svg style="position:absolute;left:1789px;top:121px;" width="6" height="3" viewBox="0 0 6 3"><polygon points="0,0 6,0 3,3" fill="#555"/></svg>
<svg style="position:absolute;left:1816px;top:64px;" width="30" height="30" viewBox="0 0 30 30"><circle cx="17.5" cy="11" r="8.5" fill="none" stroke="#3f7bc4" stroke-width="2.4"/><path d="M11.5 17 L2.5 26" stroke="#3f7bc4" stroke-width="3.4" stroke-linecap="round"/></svg>
<span style="left:1810.00px;top:98.00px;font-family:'Liberation Sans';font-size:11.86px;line-height:16px;color:#333333;font-weight:400;">Найти и</span>
<span style="left:1802.50px;top:114.00px;font-family:'Liberation Sans';font-size:11.72px;line-height:16px;color:#333333;font-weight:400;">выделить</span>
<svg style="position:absolute;left:1857px;top:121px;" width="6" height="3" viewBox="0 0 6 3"><polygon points="0,0 6,0 3,3" fill="#555"/></svg>
<div style="left:5px;top:160px;width:102px;height:26px;background:#fff;border:1px solid #c6c6c6"></div>
<span style="left:12.00px;top:165.50px;font-family:'Liberation Sans';font-size:12.80px;line-height:16px;color:#333333;font-weight:400;">B12</span>
<svg style="position:absolute;left:92px;top:171px;" width="8" height="4" viewBox="0 0 8 4"><polygon points="0,0 8,0 4,4" fill="#555"/></svg>
<div style="left:121px;top:167px;width:2px;height:2px;background:#9a9a9a"></div>
<div style="left:121px;top:172px;width:2px;height:2px;background:#9a9a9a"></div>
<div style="left:121px;top:177px;width:2px;height:2px;background:#9a9a9a"></div>
<div style="left:137px;top:160px;width:110px;height:26px;background:#fff;border:1px solid #c6c6c6"></div>
<svg style="position:absolute;left:149px;top:167px;" width="13" height="12" viewBox="0 0 13 12"><path d="M1.5 1 L11.5 11 M11.5 1 L1.5 11" stroke="#a6a6a6" stroke-width="1.3"/></svg>
<svg style="position:absolute;left:185px;top:167px;" width="15" height="12" viewBox="0 0 15 12"><path d="M1.5 6.5 L5.5 10.5 L13.5 1.5" fill="none" stroke="#c8c8c8" stroke-width="2"/></svg>
<span style="left:222.00px;top:165.00px;font-family:'Liberation Serif';font-size:16.63px;line-height:16px;color:#555;font-weight:400;font-style:italic;">fx</span>
<div style="left:250px;top:160px;width:1665px;height:26px;background:#fff;border:1px solid #c6c6c6"></div>
<svg style="position:absolute;left:1901px;top:169px;" width="11" height="7" viewBox="0 0 11 7"><path d="M1.5 1.5 L5.5 5.5 L9.5 1.5" fill="none" stroke="#555" stroke-width="1.6"/></svg>
<span style="left:1614.60px;top:210.00px;font-family:'Liberation Sans';font-size:19.99px;line-height:26px;color:#217346;font-weight:400;">Формат фигуры</span>
<svg style="position:absolute;left:1879px;top:216px;" width="10" height="6" viewBox="0 0 10 6"><polygon points="0,0 10,0 5,5.5" fill="#666"/></svg>
<svg style="position:absolute;left:1896px;top:213px;" width="12" height="12" viewBox="0 0 12 12"><path d="M1.5 1.5 L10.5 10.5 M10.5 1.5 L1.5 10.5" stroke="#555" stroke-width="1.8"/></svg>
<svg style="position:absolute;left:1618px;top:238px;" width="27" height="25" viewBox="0 0 27 25"><path d="M2 13 L11.5 3.8 L21 13 L11.5 22.5 Z" fill="#fff" stroke="#217346" stroke-width="1.3" stroke-linejoin="miter"/><circle cx="10.9" cy="3" r="2.4" fill="none" stroke="#217346" stroke-width="1.2"/><path d="M12.2 3.5 V9.5" stroke="#217346" stroke-width="1.2"/><circle cx="12.2" cy="9.7" r="1.6" fill="#217346"/><path d="M15 6.5 C20 7 24.5 9.5 24.8 13.5 C25 16.5 22.5 19.5 21.5 21.8 C21.8 18.5 21.5 15.5 19.6 12.3 Z" fill="#217346"/></svg>
<svg style="position:absolute;left:1660px;top:238px;" width="23" height="26" viewBox="0 0 23 26"><defs><linearGradient id="pg" x1="0" y1="0" x2="0" y2="1"><stop offset="0" stop-color="#fff"/><stop offset="1" stop-color="#e6e6e6"/></linearGradient></defs><path d="M5.6 19.6 L4.4 24.6 H18.8 L17.2 19.6 Z" fill="url(#pg)"/><path d="M5.6 19.6 L4.4 24.6 M17.2 19.6 L18.8 24.6" stroke="#9a9a9a" stroke-width="1.1"/><path d="M11.25 1.2 L21.25 8.5 L17.2 19.6 H5.6 L1.25 8.5 Z" fill="#fff" stroke="#777" stroke-width="1.2"/><path d="M5.6 19.6 H17.2" stroke="#666" stroke-width="2"/></svg>
<svg style="position:absolute;left:1699px;top:238px;" width="24" height="25" viewBox="0 0 24 25"><path d="M7.25 4.6 H22 M7.75 2.1 V7 M21.5 2.1 V7 M3.4 8.4 V22.75 M1 8.9 H5.7 M1 22.25 H5.7" stroke="#777" stroke-width="1.1"/><rect x="7.25" y="8.4" width="14.75" height="14.35" rx="1.2" fill="#6d6d6d"/><path d="M14.6 9.8 V14.2 M14.6 17.2 V21.4 M8.6 15.7 H13 M16.2 15.7 H20.4" stroke="#fff" stroke-width="1.1"/><path d="M12.8 11.6 L14.6 9.4 L16.4 11.6 Z M12.8 19.6 L14.6 21.8 L16.4 19.6 Z M10.4 13.9 L8.2 15.7 L10.4 17.5 Z M18.6 13.9 L20.8 15.7 L18.6 17.5 Z" fill="#fff"/></svg>
<svg style="position:absolute;left:1613px;top:271px;" width="294" height="10" viewBox="0 0 294 10"><path d="M0 9.5 H11.5 L17.5 2.5 L23.5 9.5 H294" fill="none" stroke="#c6c6c6"/></svg>
<svg style="position:absolute;left:1621px;top:290px;" width="8" height="11" viewBox="0 0 8 11"><path d="M1.5 1 L6.5 5.5 L1.5 10 Z" fill="none" stroke="#777"/></svg>
<span style="left:1636.00px;top:287.70px;font-family:'Liberation Sans';font-size:11.70px;line-height:16px;color:#444;font-weight:700;">Заливка</span>
<svg style="position:absolute;left:1621px;top:316px;" width="8" height="8" viewBox="0 0 8 8"><polygon points="7,0.5 7,7 0.5,7" fill="#444"/></svg>
<span style="left:1636.00px;top:313.80px;font-family:'Liberation Sans';font-size:12.28px;line-height:16px;color:#217346;font-weight:700;">Линия</span>
<div style="left:1637px;top:344.3px;width:12px;height:12px;background:#f4f4f4;border:1px solid #d6d6d6;border-radius:50%"></div>
<div style="left:1640px;top:347.3px;width:6px;height:6px;background:#c6c6c6;border-radius:50%"></div>
<span style="left:1654.30px;top:342.30px;font-family:'Liberation Sans';font-size:11.91px;line-height:16px;color:#a6a6a6;font-weight:400;">Нет линий</span>
<div style="left:1654px;top:356.3px;width:8px;height:1px;background:#a6a6a6"></div>
<div style="left:1637px;top:366.7px;width:12px;height:12px;background:#f4f4f4;border:1px solid #d6d6d6;border-radius:50%"></div>
<span style="left:1654.30px;top:364.70px;font-family:'Liberation Sans';font-size:11.93px;line-height:16px;color:#a6a6a6;font-weight:400;">Сплошная линия</span>
<div style="left:1654px;top:378.7px;width:8px;height:1px;background:#a6a6a6"></div>
<div style="left:1637px;top:389.1px;width:12px;height:12px;background:#f4f4f4;border:1px solid #d6d6d6;border-radius:50%"></div>
<span style="left:1654.30px;top:387.10px;font-family:'Liberation Sans';font-size:11.62px;line-height:16px;color:#a6a6a6;font-weight:400;">Градиентная линия</span>
<div style="left:1654px;top:401.1px;width:8px;height:1px;background:#a6a6a6"></div>
<svg style="position:absolute;left:22px;top:997px;" width="10" height="14" viewBox="0 0 10 14"><polygon points="7,2 2,7 7,12" fill="#c6c6c6"/></svg>
<svg style="position:absolute;left:52px;top:997px;" width="10" height="14" viewBox="0 0 10 14"><polygon points="3,2 8,7 3,12" fill="#c6c6c6"/></svg>
<div style="left:100px;top:994px;width:1px;height:20px;background:#a6a6a6"></div>
<span style="left:113.00px;top:995.60px;font-family:'Liberation Sans';font-size:12.70px;line-height:16px;color:#444;font-weight:400;">Трэнд</span>
<div style="left:162px;top:990px;width:39px;height:25px;background:#fff;border-left:1px solid #c6c6c6;border-right:1px solid #c6c6c6"></div>
<div style="left:162px;top:1013px;width:39px;height:2px;background:#217346"></div>
<span style="left:174.00px;top:995.60px;font-family:'Liberation Sans';font-size:12.35px;line-height:16px;color:#217346;font-weight:700;">зп</span>
<span style="left:214.30px;top:995.60px;font-family:'Liberation Sans';font-size:12.51px;line-height:16px;color:#444;font-weight:400;">Смета затрат</span>
<div style="left:306px;top:994px;width:1px;height:20px;background:#a6a6a6"></div>
<span style="left:320.40px;top:995.60px;font-family:'Liberation Sans';font-size:12.63px;line-height:16px;color:#444;font-weight:400;">прайс-лист</span>
<div style="left:399px;top:994px;width:1px;height:20px;background:#a6a6a6"></div>
<svg style="position:absolute;left:432px;top:995px;" width="18" height="18" viewBox="0 0 18 18"><circle cx="9" cy="9" r="7.6" fill="none" stroke="#666" stroke-width="1.4"/><path d="M9 4.5 V13.5 M4.5 9 H13.5" stroke="#666" stroke-width="1.8"/></svg>
<div style="left:960px;top:999px;width:2px;height:2px;background:#9a9a9a"></div>
<div style="left:960px;top:1003px;width:2px;height:2px;background:#9a9a9a"></div>
<div style="left:960px;top:1007px;width:2px;height:2px;background:#9a9a9a"></div>
<div style="left:977px;top:997px;width:16px;height:15px;background:#fff;border:1px solid #ababab"></div>
<svg style="position:absolute;left:977px;top:997px;" width="16" height="15" viewBox="0 0 16 15"><polygon points="10,4 6,7.5 10,11" fill="#666"/></svg>
<div style="left:992px;top:997px;width:536px;height:15px;background:#fff;border:1px solid #ababab"></div>
<div style="left:1528px;top:998px;width:36px;height:13px;background:#dadada"></div>
<div style="left:1564px;top:997px;width:15px;height:15px;background:#fff;border:1px solid #c6c6c6"></div>
<svg style="position:absolute;left:1564px;top:997px;" width="15" height="15" viewBox="0 0 15 15"><polygon points="6,4 10,7.5 6,11" fill="#666"/></svg>
<span style="left:8.00px;top:1020.50px;font-family:'Liberation Sans';font-size:11.50px;line-height:16px;color:#444;font-weight:400;">Готово</span>
<div style="left:1628px;top:1019px;width:38px;height:21px;background:#c9c9c9"></div>
<svg style="position:absolute;left:1640px;top:1022px;" width="14" height="14" viewBox="0 0 14 14"><rect x="0.5" y="0.5" width="12" height="12" fill="none" stroke="#666"/><path d="M4.5 0.5 V12.5 M8.5 0.5 V12.5 M0.5 4.5 H12.5 M0.5 8.5 H12.5" stroke="#666"/></svg>
<svg style="position:absolute;left:1678px;top:1022px;" width="15" height="14" viewBox="0 0 15 14"><rect x="0.5" y="0.5" width="13" height="12" fill="none" stroke="#666"/><rect x="3.5" y="2.5" width="7" height="8" fill="none" stroke="#666"/><path d="M5 4.5 H9 M5 6.5 H9 M5 8.5 H9" stroke="#666"/></svg>
<svg style="position:absolute;left:1716px;top:1022px;" width="15" height="14" viewBox="0 0 15 14"><rect x="0.5" y="0.5" width="13" height="12" fill="none" stroke="#666"/><path d="M4.5 0.5 V7.5 M8.5 0.5 V7.5 M0.5 7.5 H8.5" fill="none" stroke="#666"/></svg>
<div style="left:1747px;top:1028px;width:6px;height:2px;background:#666"></div>
<div style="left:1757px;top:1028px;width:100px;height:1px;background:#a6a6a6"></div>
<div style="left:1805px;top:1023px;width:4px;height:11px;background:#666"></div>
<svg style="position:absolute;left:1860px;top:1024px;" width="10" height="10" viewBox="0 0 10 10"><path d="M5 0.5 V9.5 M0.5 5 H9.5" stroke="#666" stroke-width="1.6"/></svg>
<span style="left:1885.00px;top:1021.00px;font-family:'Liberation Sans';font-size:10.17px;line-height:16px;color:#444;font-weight:400;">100%</span>
<svg style="position:absolute;left:15.6px;top:1051.7px" width="16.7" height="16.4" viewBox="0 0 18 17.6" preserveAspectRatio="none"><path d="M0 2.5 L7.4 1.5 V8.3 H0 Z M8.3 1.4 L18 0 V8.3 H8.3 Z M0 9.2 H7.4 V16.1 L0 15.1 Z M8.3 9.2 H18 V17.6 L8.3 16.3 Z" fill="#fff"/></svg>
<svg style="position:absolute;left:63px;top:1051px;" width="18" height="18" viewBox="0 0 18 18"><circle cx="11" cy="6.5" r="5.4" fill="none" stroke="#fff" stroke-width="1.4"/><path d="M7 10.5 L1 16.5" stroke="#fff" stroke-width="1.6"/></svg>
<svg style="position:absolute;left:111px;top:1050px;" width="23" height="20" viewBox="0 0 23 20"><path d="M0 2 H8 L10 4 H22 V19 H0 Z" fill="#f0c14b"/><rect x="0" y="4" width="22" height="15" fill="#fcd669"/><path d="M4.5 19 V12 H17.5 V19 H14 V15 H8 V19 Z" fill="#3e8ed0"/></svg>
<div style="left:103px;top:1078px;width:40px;height:2px;background:#76b9ed"></div>
<svg style="position:absolute;left:160px;top:1048px;" width="24" height="24" viewBox="0 0 24 24"><rect x="0.75" y="0.75" width="22.5" height="22.5" fill="#333" stroke="#1ba1e2" stroke-width="1.5"/><circle cx="12" cy="12" r="8.5" fill="none" stroke="#1ba1e2" stroke-width="1.5"/><path d="M9 6 V18 M9 12 L15 6 M10.5 10.5 L17 18" fill="none" stroke="#1ba1e2" stroke-width="1.5"/></svg>
<svg style="position:absolute;left:208px;top:1047px;" width="26" height="26" viewBox="0 0 26 26"><defs><linearGradient id="eg" x1="0" y1="0" x2="1" y2="1"><stop offset="0" stop-color="#1e9de0"/><stop offset="0.6" stop-color="#37c3a0"/><stop offset="1" stop-color="#7be15c"/></linearGradient></defs><path d="M13 1 C20 1 25 6 25 12 C25 16 22 18 18.5 18 C15 18 14 16 15 14 C16 12 14 9 10.5 9 C6 9 3 12 2 16 C1 8 6 1 13 1 Z" fill="url(#eg)"/><path d="M2 16 C3 22 8 25 13 25 C17 25 21 23 23 20 C20 22 15 22 12 19 C9 16 10 12 12 10 C7 10 3 12 2 16 Z" fill="#1b6fc8"/><circle cx="6.5" cy="18.5" r="5.5" fill="#d9d9d9" stroke="#999"/><circle cx="6.5" cy="17" r="2" fill="#999"/><path d="M3 22 C4 19.5 9 19.5 10 22" fill="#999"/></svg>
<svg style="position:absolute;left:258px;top:1048px;" width="24" height="24" viewBox="0 0 24 24"><rect x="0.75" y="0.75" width="22.5" height="22.5" fill="#fff" stroke="#8b2a9e" stroke-width="1.5"/><text x="2" y="10" font-family="Liberation Serif" font-weight="700" font-size="10" fill="#1c2f8f">A</text><text x="12" y="10" font-family="Liberation Serif" font-weight="700" font-size="10" fill="#1b8a2a">B</text><text x="7" y="17" font-family="Liberation Serif" font-weight="700" font-size="10" fill="#d01b1b">C</text><text x="2" y="21.5" font-family="Liberation Sans" font-weight="700" font-size="7" fill="#111">.net</text></svg>
<svg style="position:absolute;left:307px;top:1048px;" width="24" height="24" viewBox="0 0 24 24"><path d="M11 3 H22 V21 H11 Z" fill="#fff" stroke="#d24625"/><path d="M13 6 A3 3 0 1 0 16 3 V6 Z M14 12 H20 M14 15 H20 M14 18 H20" stroke="#d24625" fill="none"/><path d="M0 3 L13 1 V23 L0 21 Z" fill="#d24625"/><text x="2.5" y="16.5" font-family="Liberation Sans" font-weight="700" font-size="11" fill="#fff">P</text></svg>
<div style="left:299px;top:1078px;width:40px;height:2px;background:#76b9ed"></div>
<div style="left:344px;top:1040px;width:44px;height:40px;background:#3a3a3a"></div>
<div style="left:388px;top:1040px;width:4px;height:40px;background:#2b2b2b"></div>
<svg style="position:absolute;left:356px;top:1048px;" width="23" height="24" viewBox="0 0 23 24"><rect x="11" y="3" width="11" height="18" fill="#fff" stroke="#1d7044"/><path d="M11 7 H22 M11 11 H22 M11 15 H22 M16 3 V21" stroke="#1d7044"/><path d="M0 3 L13 1 V23 L0 21 Z" fill="#1d7044"/><text x="2.5" y="16.5" font-family="Liberation Sans" font-weight="700" font-size="11" fill="#fff">X</text></svg>
<div style="left:344px;top:1078px;width:48px;height:2px;background:#76b9ed"></div>
<svg style="position:absolute;left:405px;top:1048px;" width="24" height="24" viewBox="0 0 24 24"><rect x="11" y="3" width="11" height="18" fill="#fff" stroke="#2b579a"/><path d="M13 7 H20 M13 10 H20 M13 13 H20 M13 16 H20" stroke="#2b579a"/><path d="M0 3 L13 1 V23 L0 21 Z" fill="#2b579a"/><text x="1" y="16.5" font-family="Liberation Sans" font-weight="700" font-size="10" fill="#fff">W</text></svg>
<div style="left:397px;top:1078px;width:40px;height:2px;background:#76b9ed"></div>
<svg style="position:absolute;left:1722px;top:1055px;" width="14" height="9" viewBox="0 0 14 9"><path d="M1 8 L7 2 L13 8" fill="none" stroke="#fff" stroke-width="1.3"/></svg>
<svg style="position:absolute;left:1744px;top:1053px;" width="18" height="15" viewBox="0 0 18 15"><rect x="4.5" y="2.5" width="12" height="8" fill="none" stroke="#fff"/><path d="M10.5 10.5 V13 M7 13.5 H14" stroke="#fff"/><rect x="0.5" y="0.5" width="4" height="3.5" fill="#1b1b1b" stroke="#fff"/><path d="M2.5 4 V14" stroke="#fff"/></svg>
<span style="left:1772.00px;top:1051.40px;font-family:'Liberation Sans';font-size:11.24px;line-height:16px;color:#fff;font-weight:400;">РУС</span>
<span style="left:1820.80px;top:1043.00px;font-family:'Liberation Sans';font-size:10.47px;line-height:16px;color:#fff;font-weight:400;">13:36</span>
<span style="left:1806.70px;top:1060.40px;font-family:'Liberation Sans';font-size:10.79px;line-height:16px;color:#fff;font-weight:400;">07.03.2023</span>
<svg style="position:absolute;left:1879px;top:1051px;" width="28" height="26" viewBox="0 0 28 26"><path d="M1 1.5 H16 V12.5 H7 L4 15.5 V12.5 H1 Z" fill="#fff"/><path d="M4 5 H13 M4 8 H13" stroke="#1b1b1b" stroke-width="1.2"/><circle cx="16" cy="16" r="7.5" fill="#1b1b1b" stroke="#777"/><text x="12.6" y="20.3" font-family="Liberation Sans" font-weight="700" font-size="11" fill="#fff">5</text></svg>
<div style="left:1915px;top:1040px;width:1px;height:40px;background:#555"></div>
</body></html>
